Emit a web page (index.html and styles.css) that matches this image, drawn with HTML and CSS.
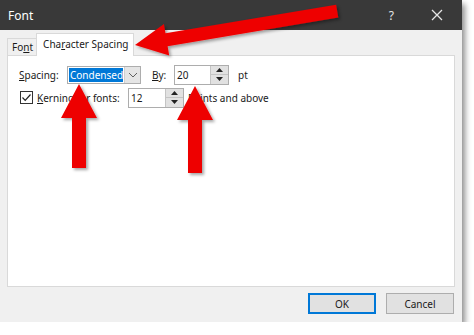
FILE: index.html
```html
<!DOCTYPE html>
<html lang="en">
<head>
  <meta charset="UTF-8" />
  <title>Font</title>
  <link rel="stylesheet" href="styles.css">
</head>
<body>
  <div class="dialog">
    <div class="titlebar">
      <span class="title">Font</span>
      <span class="help">?</span>
      <span class="close">
        <svg width="12" height="12" viewBox="0 0 12 12"><path d="M1 1 L11 11 M11 1 L1 11" stroke="#e6e6e6" stroke-width="1.3" fill="none"/></svg>
      </span>
    </div>
    <div class="body">
      <div class="tabs">
        <div class="tab">Fo<u>n</u>t</div>
        <div class="tab active">Cha<u>r</u>acter Spacing</div>
      </div>
      <div class="panel">
        <div class="row">
          <span class="label label-spacing"><u>S</u>pacing:</span>
          <div class="combo">
            <span class="combo-value"><span class="selected">Condensed</span></span>
            <span class="combo-btn">
              <svg width="10" height="6" viewBox="0 0 10 6"><path d="M1 1 L5 5 L9 1" stroke="#606060" stroke-width="1" fill="none"/></svg>
            </span>
          </div>
          <span class="label label-by"><u>B</u>y:</span>
          <div class="spin spin-by">
            <span class="spin-value">20</span>
            <span class="spin-btns">
              <span class="spin-up"><svg width="7" height="4" viewBox="0 0 7 4"><path d="M0 4 L3.5 0 L7 4 Z" fill="#222"/></svg></span>
              <span class="spin-down"><svg width="7" height="4" viewBox="0 0 7 4"><path d="M0 0 L3.5 4 L7 0 Z" fill="#222"/></svg></span>
            </span>
          </div>
          <span class="unit">pt</span>
        </div>
        <div class="row row-kern">
          <span class="check">
            <svg width="11" height="11" viewBox="0 0 11 11"><path d="M1.5 5.5 L4.2 8.3 L9.5 2.5" stroke="#222" stroke-width="1.2" fill="none"/></svg>
          </span>
          <span class="label label-kern"><u>K</u>erning for fonts:</span>
          <div class="spin spin-kern">
            <span class="spin-value">12</span>
            <span class="spin-btns">
              <span class="spin-up"><svg width="7" height="4" viewBox="0 0 7 4"><path d="M0 4 L3.5 0 L7 4 Z" fill="#222"/></svg></span>
              <span class="spin-down"><svg width="7" height="4" viewBox="0 0 7 4"><path d="M0 0 L3.5 4 L7 0 Z" fill="#222"/></svg></span>
            </span>
          </div>
          <span class="unit unit-kern">Points and above</span>
        </div>
      </div>
      <div class="footer">
        <button class="btn btn-default">OK</button>
        <button class="btn">Cancel</button>
      </div>
    </div>
  </div>

  <!-- red callout arrows drawn over the dialog -->
  <svg class="arrows" width="474" height="335" viewBox="0 0 474 335">
    <defs>
      <filter id="shadow" x="-20%" y="-20%" width="140%" height="140%">
        <feDropShadow dx="2" dy="2" stdDeviation="1.5" flood-color="#000" flood-opacity="0.35"/>
      </filter>
    </defs>
    <g filter="url(#shadow)" fill="#ee0000">
      <g transform="translate(135 45) rotate(-9.5)">
        <polygon points="0,0 32,-16 32,-6.5 205,-6.5 205,6.5 32,6.5 32,16"/>
      </g>
      <polygon points="79,84 97,118 86,118 86,168 72,168 72,118 61,118"/>
      <polygon points="195,86 213,120 202,120 202,173 188,173 188,120 177,120"/>
    </g>
  </svg>
</body>
</html>
```

FILE: styles.css
```css
body {
  margin: 0;
  background: #fff;
  font-family: "Noto Sans", "Open Sans", sans-serif;
  font-size: 10px;
  color: #1a1a1a;
}
.dialog {
  width: 462px;
  height: 322px;
  background: #f0f0f0;
  display: flex;
  flex-direction: column;
  box-shadow: 3px 4px 6px rgba(0,0,0,0.45);
}
.titlebar {
  height: 30px;
  background: #393939;
  color: #fff;
  display: flex;
  align-items: center;
  padding-left: 8px;
}
.titlebar .title {
  font-size: 12px;
  flex: 1;
}
.titlebar .help {
  font-size: 12px;
  color: #e6e6e6;
  margin-right: 37px;
}
.titlebar .close {
  display: flex;
  margin-right: 19px;
}
.body {
  flex: 1;
  display: flex;
  flex-direction: column;
  padding: 3px 7px 0 7px;
}
.tabs {
  height: 22px;
  display: flex;
  align-items: flex-end;
}
.tab {
  height: 17px;
  border: 1px solid #d9d9d9;
  border-bottom: none;
  border-right: none;
  padding: 0 3px 0 4px;
  box-sizing: border-box;
  line-height: 16px;
}
.tab.active {
  height: 23px;
  width: 98px;
  background: #fff;
  border-right: 1px solid #d9d9d9;
  margin-bottom: -1px;
  padding-left: 6px;
  line-height: 20px;
  position: relative;
}
.panel {
  height: 232px;
  box-sizing: border-box;
  background: #fff;
  border: 1px solid #d9d9d9;
  padding: 9px 11px;
}
.row {
  display: flex;
  align-items: center;
  height: 19px;
}
.row-kern {
  margin-top: 4px;
}
.label-spacing {
  width: 48px;
}
.combo {
  width: 74px;
  height: 18px;
  box-sizing: border-box;
  border: 1px solid #adadad;
  display: flex;
}
.combo-value {
  flex: 1;
  padding: 1px;
  display: flex;
}
.combo-value .selected {
  flex: 1;
  background: #0078d7;
  color: #fff;
  padding-left: 1px;
  line-height: 14px;
}
.combo-btn {
  width: 16px;
  background: #e5e5e5;
  border-left: 1px solid #cfcfcf;
  display: flex;
  align-items: center;
  justify-content: center;
}
.label-by {
  margin-left: 11px;
  width: 22px;
}
.spin {
  width: 55px;
  height: 20px;
  box-sizing: border-box;
  border: 1px solid #adadad;
  background: #fff;
  display: flex;
}
.spin-kern {
  width: 56px;
}
.spin-value {
  flex: 1;
  padding-left: 2px;
  line-height: 18px;
}
.spin-btns {
  width: 17px;
  display: flex;
  flex-direction: column;
  background: #e1e1e1;
  border-left: 1px solid #c4c4c4;
}
.spin-btns span {
  flex: 1;
  display: flex;
  align-items: center;
  justify-content: center;
}
.spin-up {
  border-bottom: 1px solid #c4c4c4;
}
.unit {
  margin-left: 9px;
}
.unit-kern {
  margin-left: 4px;
}
.check {
  width: 13px;
  height: 13px;
  box-sizing: border-box;
  border: 1px solid #333;
  margin-left: 1px;
  display: flex;
  align-items: center;
  justify-content: center;
}
.label-kern {
  margin-left: 4px;
  width: 91px;
}
.footer {
  height: 35px;
  display: flex;
  justify-content: flex-end;
  align-items: flex-start;
  padding-top: 6px;
  box-sizing: border-box;
  gap: 10px;
  padding-right: 1px;
}
.btn {
  width: 68px;
  height: 21px;
  background: #e1e1e1;
  border: 1px solid #adadad;
  font-family: inherit;
  font-size: 10px;
  color: #1a1a1a;
  padding: 0;
}
.btn-default {
  border: 1px solid #0078d7;
  box-shadow: inset 0 0 0 1px #0078d7;
}
.arrows {
  position: absolute;
  left: 0;
  top: 0;
  pointer-events: none;
}
```
